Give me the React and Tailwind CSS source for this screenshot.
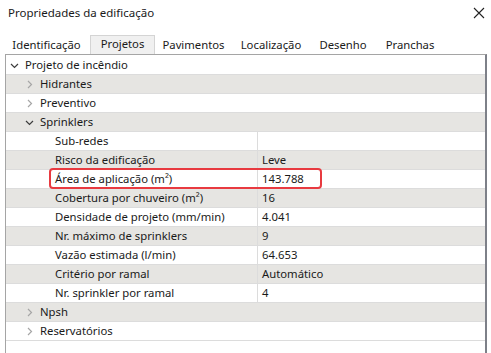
import React from 'react'

const rows = [
  { level: 0, label: 'Projeto de incêndio', chevron: 'open' },
  { level: 1, label: 'Hidrantes', chevron: 'closed' },
  { level: 1, label: 'Preventivo', chevron: 'closed' },
  { level: 1, label: 'Sprinklers', chevron: 'open' },
  { level: 2, label: 'Sub-redes', value: '' },
  { level: 2, label: 'Risco da edificação', value: 'Leve' },
  { level: 2, label: 'Área de aplicação (m²)', value: '143.788', highlight: true },
  { level: 2, label: 'Cobertura por chuveiro (m²)', value: '16' },
  { level: 2, label: 'Densidade de projeto (mm/min)', value: '4.041' },
  { level: 2, label: 'Nr. máximo de sprinklers', value: '9' },
  { level: 2, label: 'Vazão estimada (l/min)', value: '64.653' },
  { level: 2, label: 'Critério por ramal', value: 'Automático' },
  { level: 2, label: 'Nr. sprinkler por ramal', value: '4' },
  { level: 1, label: 'Npsh', chevron: 'closed' },
  { level: 1, label: 'Reservatórios', chevron: 'closed' },
]

// tab widths picked so labels sit where the dialog puts them
const tabs = [
  { label: 'Identificação', w: 'w-[87px]' },
  { label: 'Projetos', w: 'w-[65px]', active: true },
  { label: 'Pavimentos', w: 'w-[77px]' },
  { label: 'Localização', w: 'w-[78px]' },
  { label: 'Desenho', w: 'w-[66px]' },
  { label: 'Pranchas', w: 'w-[68px]' },
]

const Chevron = ({ open }) =>
  open ? (
    <svg width="9" height="9" viewBox="0 0 9 9" className="shrink-0">
      <path d="M1 3 L4.5 6.5 L8 3" fill="none" stroke="#3c3c3c" strokeWidth="1.2" />
    </svg>
  ) : (
    <svg width="9" height="9" viewBox="0 0 9 9" className="shrink-0">
      <path d="M3 1 L6.5 4.5 L3 8" fill="none" stroke="#a6a6a6" strokeWidth="1.2" />
    </svg>
  )

const App = () => {
  return (
    <div className="w-[491px] h-[353px] bg-white overflow-hidden text-[11.3px] text-[#1a1a1a]" style={{ fontFamily: '"Noto Sans", sans-serif' }}>
      <div className="flex items-center justify-between h-[26px] pl-[8px] pr-[6px]">
        <span className="text-[11.5px]">Propriedades da edificação</span>
        <svg width="12" height="12" viewBox="0 0 12 12">
          <path d="M1 1 L11 11 M11 1 L1 11" stroke="#222" strokeWidth="1.1" />
        </svg>
      </div>

      <div className="flex items-end h-[28px] pl-[3px]">
        {tabs.map((t) => (
          <div
            key={t.label}
            className={
              t.active
                ? `${t.w} h-[19px] flex items-center justify-center bg-[#f0f0f0] border border-b-0 border-[#d4d4d4] pb-[2px]`
                : `${t.w} h-[17px] flex items-center justify-center`
            }
          >
            {t.label}
          </div>
        ))}
      </div>

      <div className="ml-[5px] mr-[4px] h-[300px] pt-[1px] border-t border-l border-r border-t-[#a5a5a5] border-l-[#a5a5a5] border-r-[#7d8088] border-r-2">
        {rows.map((r, i) => {
          const gray = i % 2 === 1
          return (
            <div
              key={r.label}
              className={`flex h-[19px] border-b border-[#dcdcdc] ${gray ? 'bg-[#e6e5e2]' : 'bg-white'}`}
            >
              {r.value === undefined ? (
                <div className={`flex items-center gap-[6px] ${r.level === 0 ? 'pl-[4px]' : 'pl-[19px]'}`}>
                  <Chevron open={r.chevron === 'open'} />
                  <span>{r.label}</span>
                </div>
              ) : (
                <>
                  <div className="w-[252px] shrink-0 flex items-center pl-[49px] border-r border-[#dcdcdc] relative">
                    {r.highlight && (
                      <div className="absolute left-[43px] top-[-2px] w-[273px] h-[21px] border-2 border-[#e83a40] rounded-[4px] z-10" />
                    )}
                    <span>{r.label}</span>
                  </div>
                  <div className="flex items-center pl-[4px]">{r.value}</div>
                </>
              )}
            </div>
          )
        })}
      </div>
    </div>
  )
}

export default App
